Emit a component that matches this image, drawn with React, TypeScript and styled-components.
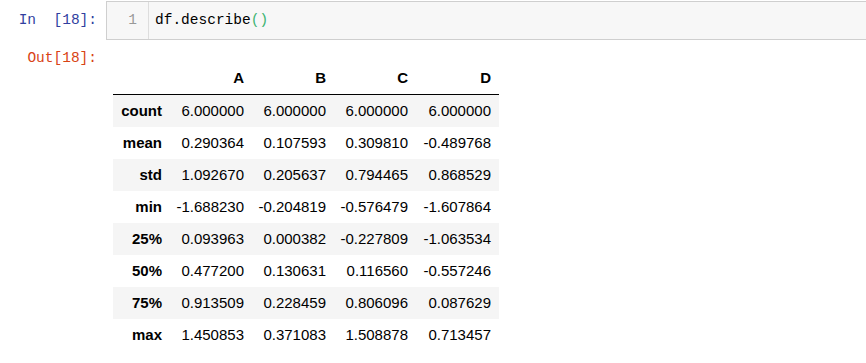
import React from 'react'
import styled, { createGlobalStyle } from 'styled-components'

const GlobalStyle = createGlobalStyle`
    html, body {
        margin: 0;
        padding: 0;
        background: #fff;
        overflow: hidden;
    }
`

const MONO = `"Liberation Mono", "DejaVu Sans Mono", monospace`
const SANS = `"Liberation Sans", Arial, sans-serif`

const Notebook = styled.div`
    width: 866px;
    padding-top: 1px;
`

const CellRow = styled.div<{ $gap?: number }>`
    display: grid;
    grid-template-columns: 106px 1fr;
    margin-top: ${p => p.$gap ?? 0}px;
`

const Prompt = styled.div<{ $kind: 'in' | 'out' }>`
    font-family: ${MONO};
    font-size: 14.5px;
    color: ${p => (p.$kind === 'in' ? '#303F9F' : '#D84315')};
    text-align: right;
    padding-right: 9px;
    line-height: ${p => (p.$kind === 'in' ? '39px' : '20px')};
    white-space: pre;
`

const CodeBox = styled.div`
    display: flex;
    height: 37px;
    border: 1px solid #cfcfcf;
    background: #f7f7f7;
    margin-right: -4px;
`

const Gutter = styled.div`
    width: 41px;
    border-right: 1px solid #ddd;
    box-sizing: content-box;
    font-family: ${MONO};
    font-size: 14.5px;
    line-height: 37px;
    color: #999;
    text-align: right;
    & > span {
        display: inline-block;
        padding-right: 11px;
    }
`

const Code = styled.div`
    font-family: ${MONO};
    font-size: 14.5px;
    line-height: 37px;
    color: #000;
    padding-left: 6px;
    white-space: pre;
`

const Bracket = styled.span`
    color: #3cb371;
`

const Table = styled.table`
    border-collapse: collapse;
    table-layout: fixed;
    margin: 14px 0 0 7px;
    font-family: ${SANS};
    font-size: 15px;
    color: #000;
`

const HeadCell = styled.th<{ $w: number }>`
    width: ${p => p.$w}px;
    height: 32px;
    padding: 0 8px 0 0;
    text-align: right;
    font-weight: bold;
    border-bottom: 1px solid #000;
    box-sizing: border-box;
`

const Row = styled.tr<{ $striped: boolean }>`
    background: ${p => (p.$striped ? '#f5f5f5' : '#fff')};
`

const IndexCell = styled.th`
    height: 32px;
    padding: 0 8px 0 0;
    text-align: right;
    font-weight: bold;
`

const ValueCell = styled.td`
    height: 32px;
    padding: 0 8px 0 0;
    text-align: right;
    white-space: nowrap;
`

const columns = [
    { name: '', width: 57 },
    { name: 'A', width: 82 },
    { name: 'B', width: 82 },
    { name: 'C', width: 82 },
    { name: 'D', width: 83 },
]

const rows: [string, string[]][] = [
    ['count', ['6.000000', '6.000000', '6.000000', '6.000000']],
    ['mean', ['0.290364', '0.107593', '0.309810', '-0.489768']],
    ['std', ['1.092670', '0.205637', '0.794465', '0.868529']],
    ['min', ['-1.688230', '-0.204819', '-0.576479', '-1.607864']],
    ['25%', ['0.093963', '0.000382', '-0.227809', '-1.063534']],
    ['50%', ['0.477200', '0.130631', '0.116560', '-0.557246']],
    ['75%', ['0.913509', '0.228459', '0.806096', '0.087629']],
    ['max', ['1.450853', '0.371083', '1.508878', '0.713457']],
]

export default function App() {
    return (
        <>
            <GlobalStyle />
            <Notebook>
                <CellRow>
                    <Prompt $kind='in'>{'In  [18]:'}</Prompt>
                    <CodeBox>
                        <Gutter><span>1</span></Gutter>
                        <Code>df.describe<Bracket>()</Bracket></Code>
                    </CodeBox>
                </CellRow>
                <CellRow $gap={8}>
                    <Prompt $kind='out'>Out[18]:</Prompt>
                    <div>
                        <Table>
                            <thead>
                                <tr>
                                    {columns.map(c => (
                                        <HeadCell key={c.name || 'idx'} $w={c.width}>{c.name}</HeadCell>
                                    ))}
                                </tr>
                            </thead>
                            <tbody>
                                {rows.map(([label, values], i) => (
                                    <Row key={label} $striped={i % 2 === 0}>
                                        <IndexCell>{label}</IndexCell>
                                        {values.map((v, j) => (
                                            <ValueCell key={j}>{v}</ValueCell>
                                        ))}
                                    </Row>
                                ))}
                            </tbody>
                        </Table>
                    </div>
                </CellRow>
            </Notebook>
        </>
    )
}
